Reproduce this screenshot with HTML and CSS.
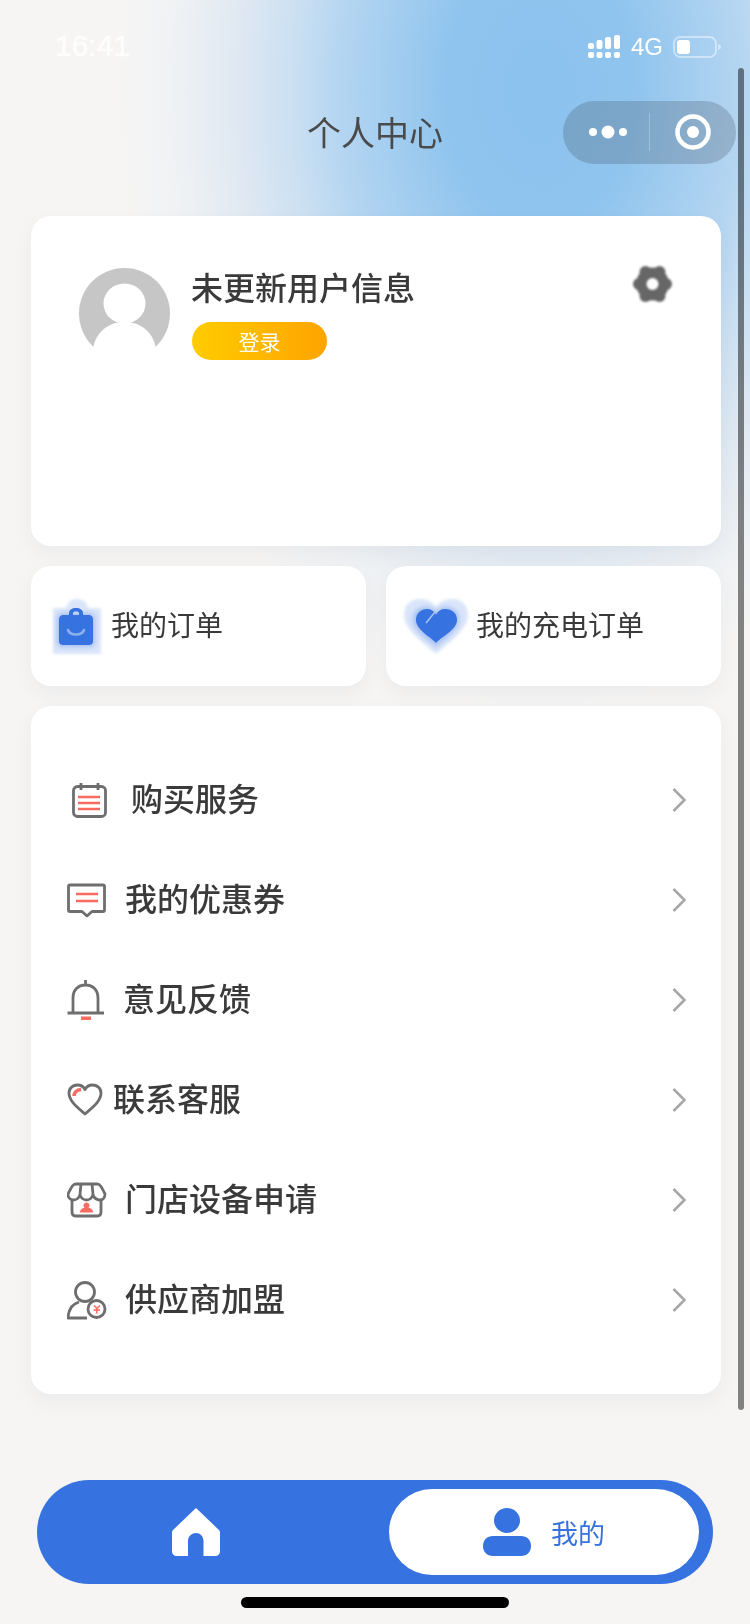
FILE: index.html
```html
<!DOCTYPE html>
<html lang="zh-CN">
<head>
<meta charset="utf-8">
<title>个人中心</title>
<link rel="stylesheet" href="styles.css">
</head>
<body>
<div class="page">
  <header class="status">
    <span class="time">16:41</span>
    <div class="status-right">
      <svg class="signal" width="32" height="23" viewBox="0 0 32 23"><g fill="#fff"><rect x="0" y="8" width="6" height="6" rx="2"/><rect x="8.500" y="5" width="6" height="9" rx="2"/><rect x="17" y="2" width="6" height="12" rx="2"/><rect x="26" y="0" width="6" height="14" rx="2"/><rect x="0" y="17" width="6" height="6" rx="2"/><rect x="8.500" y="17" width="6" height="6" rx="2"/><rect x="17" y="17" width="6" height="6" rx="2"/><rect x="26" y="17" width="6" height="6" rx="2"/></g></svg>
      <span class="net">4G</span>
      <svg class="battery" width="48" height="22" viewBox="0 0 48 22"><rect x="1" y="1" width="42" height="20" rx="6.500" fill="none" stroke="#fff" stroke-opacity=".45" stroke-width="2"/><rect x="4" y="4" width="13" height="14" rx="3" fill="#fff"/><path d="M45 8c2 .5 3 1.500 3 3s-1 2.500-3 3z" fill="#fff" fill-opacity=".45"/></svg>
    </div>
  </header>

  <nav class="nav">
    <span></span>
    <h1 class="title">个人中心</h1>
    <div class="capsule">
      <svg class="cap-dots" width="46" height="14" viewBox="0 0 46 14"><circle cx="4" cy="7" r="4" fill="#fff"/><circle cx="19" cy="7" r="6.500" fill="#fff"/><circle cx="34" cy="7" r="4" fill="#fff"/></svg>
      <i class="cap-sep"></i>
      <svg class="cap-target" width="36" height="36" viewBox="0 0 36 36"><circle cx="18" cy="18" r="15.500" fill="none" stroke="#fff" stroke-width="4.500"/><circle cx="18" cy="18" r="6" fill="#fff"/></svg>
    </div>
  </nav>

  <main class="main">
    <section class="card profile">
      <svg class="avatar" width="91" height="91" viewBox="0 0 91 91"><circle cx="45.500" cy="45.500" r="45.500" fill="#c6c6c6"/><ellipse cx="45.500" cy="35.500" rx="21" ry="20" fill="#fff"/><path d="M14.500 78C18 64 29 54 45.500 54S73 64 76.500 78V91H14.500Z" fill="#fff"/></svg>
      <div class="info">
        <div class="name">未更新用户信息</div>
        <div class="login">登录</div>
      </div>
      <svg class="gear" width="39" height="36" viewBox="0 0 39 36"><g fill="#666"><circle cx="33" cy="18" r="6"/><circle cx="6" cy="18" r="6"/><circle cx="26.500" cy="6" r="6"/><circle cx="12.500" cy="6" r="6"/><circle cx="26.500" cy="30" r="6"/><circle cx="12.500" cy="30" r="6"/><circle cx="19.500" cy="18" r="16.500"/></g><circle cx="19.500" cy="18" r="6" fill="#fff"/></svg>
    </section>

    <section class="quick">
      <div class="card quick-item quick-order">
        <svg class="q-icon" width="50" height="57" viewBox="0 0 50 57"><g class="halo" fill="#3672e0"><path d="M1 10H49V56H1Z"/><path d="M14 10C16 3 20 1 25 1S34 3 36 10Z"/></g><rect class="glow" x="5" y="15" width="38" height="34" rx="5" fill="#3672e0"/><path d="M17 17V15C17 12 20 10 24 10S31 12 31 15V17H37C39 17 41 19 41 21V43C41 46 39 47 37 47H11C9 47 7 46 7 43V21C7 19 9 17 11 17ZM21 17H27V15.500C27 14 26 13.500 24 13.500S21 14 21 15.500Z" fill="#3672e0"/><path d="M16 32C18 38 30 38 32 32" fill="none" stroke="#8db0ef" stroke-width="2.500" stroke-linecap="round"/></svg>
        <span class="q-text">我的订单</span>
      </div>
      <div class="card quick-item quick-charge">
        <svg class="q-icon" width="66" height="57" viewBox="0 0 66 57"><path class="halo" fill="#3672e0" d="M33 56C24 47 1 33 1 17 1 7 8 1 17 1 24 1 30 4 33 9 36 4 42 1 49 1 58 1 65 7 65 17 65 33 42 47 33 56Z"/><path class="glow" fill="#3672e0" d="M33 49C26 42 10 33 10 21 10 13 16 9 23 9 27 9 31 11 33 14 35 11 39 9 43 9 50 9 56 13 56 21 56 33 40 42 33 49Z"/><path fill="#3672e0" d="M33 45C28 39 13 32 13 22 13 15 18 11 24 11 28 11 31 13 33 16.500 35 13 38 11 42 11 49 11 54 15 54 22 54 32 38 39 33 45Z"/><path d="M23 25 32 14" fill="none" stroke="#a9c4f3" stroke-width="1.500"/></svg>
        <span class="q-text">我的充电订单</span>
      </div>
    </section>

    <section class="card menu">
      <div class="row">
        <svg class="m-icon soft" width="40" height="40" viewBox="0 0 40 40"><rect x="6.500" y="6.500" width="32" height="30" rx="4" class="line"/><path d="M14 3V10M31 3V10" class="line"/><path d="M11 17H33M11 23H33M11 29H33" class="red"/></svg>
        <span class="m-text gap-24">购买服务</span>
        <svg class="chev" width="14" height="24" viewBox="0 0 14 24"><path d="M1.500 1 12.500 12 1.500 23"/></svg>
      </div>
      <div class="row">
        <svg class="m-icon soft" width="40" height="40" viewBox="0 0 40 40"><path d="M3 5H36C37 5 37.500 5.500 37.500 6.500V30C37.500 31 37 31.500 36 31.500H25L20 36 15 31.500H3C2 31.500 1.500 31 1.500 30V6.500C1.500 5.500 2 5 3 5Z" class="line"/><path d="M9 14H31M9 21H31" class="red"/></svg>
        <span class="m-text gap-18">我的优惠券</span>
        <svg class="chev" width="14" height="24" viewBox="0 0 14 24"><path d="M1.500 1 12.500 12 1.500 23"/></svg>
      </div>
      <div class="row">
        <svg class="m-icon soft" width="40" height="40" viewBox="0 0 40 40"><path d="M18.500 0V5M6 33V18C6 10 11 5 18.500 5S31 10 31 18V33M.5 33H37" class="line"/><path d="M14 36.500H24V40H14Z" fill="#f96a60"/></svg>
        <span class="m-text gap-17">意见反馈</span>
        <svg class="chev" width="14" height="24" viewBox="0 0 14 24"><path d="M1.500 1 12.500 12 1.500 23"/></svg>
      </div>
      <div class="row">
        <svg class="m-icon soft" width="40" height="40" viewBox="0 0 40 40"><path d="M18 34C10 27 2 21 2 13 2 8 6 5 10.500 5 13.500 5 16.500 6.500 18 9.500 19.500 6.500 22.500 5 25.500 5 30 5 34 8 34 13 34 21 26 27 18 34Z" class="line"/><path d="M7 16C7 12.500 10 10 14 9.500" class="red thick"/></svg>
        <span class="m-text gap-6">联系客服</span>
        <svg class="chev" width="14" height="24" viewBox="0 0 14 24"><path d="M1.500 1 12.500 12 1.500 23"/></svg>
      </div>
      <div class="row">
        <svg class="m-icon soft" width="40" height="40" viewBox="0 0 40 40"><path d="M9 4H30C33 4 34 6 38 14 38 18 35.500 20 33 20 30.500 20 26 18 26 14 26 18 22 20 19.500 20S13 18 13 14C13 18 9 20 6.500 20S1 18 1 14C5 6 6 4 9 4ZM13 14 14 4M26 14 25 4" class="line"/><path d="M5 20V32C5 34.500 6.500 36 8.500 36H30.500C32.500 36 34 34.500 34 32V20" class="line"/><path d="M19.500 22.500a3 3 0 1 1 -.01 0ZM13 32.500C13 29 16 27.500 19.500 27.500S26 29 26 32.500Z" fill="#f96a60"/></svg>
        <span class="m-text gap-18">门店设备申请</span>
        <svg class="chev" width="14" height="24" viewBox="0 0 14 24"><path d="M1.500 1 12.500 12 1.500 23"/></svg>
      </div>
      <div class="row">
        <svg class="m-icon soft" width="40" height="40" viewBox="0 0 40 40"><circle cx="18" cy="12" r="9.500" class="line"/><path d="M12 22C5 24 1.500 30 1 38H20" class="line"/><circle cx="29.500" cy="29" r="8.500" class="line"/><path d="M27 25.500 30 28.500 33 25.500M29.800 28.500V33.500M26.500 30H33" class="red thin"/></svg>
        <span class="m-text gap-18">供应商加盟</span>
        <svg class="chev" width="14" height="24" viewBox="0 0 14 24"><path d="M1.500 1 12.500 12 1.500 23"/></svg>
      </div>
    </section>
  </main>

  <footer class="tabbar">
    <svg class="tab-home soft" width="48" height="48" viewBox="0 0 48 48"><path d="M24 0 47 22C47.700 22.700 48 23.500 48 24.500V43C48 46 46 48 43 48H31.500V33C31.500 28 28 25 24 25S16 28 16 33V48H5C2 48 0 46 0 43V24.500C0 23.500 .3 22.700 1 22Z" fill="#fff"/></svg>
    <div class="tab-active">
      <svg class="tab-user soft" width="48" height="48" viewBox="0 0 48 48"><ellipse cx="24" cy="12.500" rx="13" ry="12.500" fill="#3672e0"/><path d="M10 28H38C44 28 48 32 48 38S44 48 38 48H10C4 48 0 44 0 38S4 28 10 28Z" fill="#3672e0"/></svg>
      <span class="tab-label">我的</span>
    </div>
  </footer>
  <div class="home-bar"></div>
  <div class="scrollbar"></div>
</div>
</body>
</html>
```

FILE: styles.css
```css
* { box-sizing: border-box; }

html, body {
  margin: 0;
  padding: 0;
}

body {
  width: 750px;
  height: 1624px;
  overflow: hidden;
  background: #f6f5f4;
  font-family: "Noto Sans CJK SC", "Liberation Sans", sans-serif;
  color: #333;
}

.page {
  position: relative;
  width: 750px;
  height: 1624px;
  overflow: hidden;
  background-color: #f6f5f4;
  background-image: radial-gradient(ellipse 420px 620px at 540px 90px, #8bc2ee 0, #8fc4ee 22%, #b4d5f1 48%, #c9dff2 58%, #dfe8f2 72%, #eef1f4 86%, rgba(246, 245, 244, 0) 100%);
  background-repeat: no-repeat;
  filter: blur(.35px);
}

.soft { filter: blur(.5px); }

/* status bar */
.status {
  height: 88px;
  display: flex;
  justify-content: space-between;
  align-items: flex-start;
  padding: 35px 29px 0 55px;
  color: #fff;
  font-family: "Liberation Sans", sans-serif;
}

.time {
  font-size: 30px;
  line-height: 22px;
  opacity: .8;
  -webkit-text-stroke: .5px #fff;
}

.status-right {
  display: flex;
  align-items: center;
  height: 23px;
}

.net {
  margin: 0 10px 0 11px;
  font-size: 24px;
  line-height: 23px;
}

/* navigation */
.nav {
  height: 88px;
  display: grid;
  grid-template-columns: 1fr auto 1fr;
  align-items: center;
  padding-right: 14px;
}

.title {
  margin: 0;
  padding: 0 0 2px 14px;
  font-size: 34px;
  font-weight: 400;
  color: #4a4a4a;
}

.capsule {
  justify-self: end;
  width: 173px;
  height: 63px;
  display: flex;
  align-items: center;
  padding-left: 26px;
  border-radius: 32px;
  background: rgba(65, 75, 90, .25);
}

.cap-sep {
  width: 1px;
  height: 38px;
  margin: 0 25px 0 14px;
  background: rgba(255, 255, 255, .25);
}

/* main */
.main {
  display: flex;
  flex-direction: column;
  gap: 20px;
  padding: 40px 29px 0 31px;
}

.card {
  background: #fff;
  border-radius: 20px;
  box-shadow: 0 8px 20px rgba(60, 60, 70, .05);
}

.profile {
  height: 330px;
  display: flex;
  align-items: flex-start;
  padding: 50px 49px 0 48px;
}

.avatar { margin-top: 2px; flex: none; }

.info {
  margin: -2px 0 0 21px;
}

.name {
  font-size: 32px;
  line-height: 44px;
  font-weight: 500;
  color: #3a3a3a;
}

.login {
  width: 135px;
  height: 38px;
  margin: 14px 0 0 1px;
  border-radius: 19px;
  background: linear-gradient(90deg, #ffcc00, #ffa400);
  color: #fff;
  font-size: 21px;
  line-height: 38px;
  text-align: center;
}

.gear { margin-left: auto; flex: none; filter: blur(.8px); }

/* quick links */
.quick {
  display: grid;
  grid-template-columns: 1fr 1fr;
  gap: 20px;
}

.quick-item {
  height: 120px;
  display: flex;
  align-items: center;
}

.quick-order { padding-left: 21px; gap: 9px; }
.quick-charge { padding-left: 17px; gap: 7px; }

.q-icon { flex: none; overflow: visible; filter: blur(.5px); }
.halo { opacity: .18; filter: blur(1.500px); }
.glow { opacity: .32; filter: blur(2.500px); }

.q-text {
  padding-bottom: 4px;
  font-size: 28px;
  color: #3a3a3a;
}

/* menu */
.menu {
  height: 688px;
  padding: 44px 35px 44px 36px;
}

.row {
  height: 100px;
  display: flex;
  align-items: center;
}

.m-icon { flex: none; }

.line {
  fill: none;
  stroke: #6e6e6e;
  stroke-width: 2.800;
  stroke-linejoin: round;
}

.red {
  fill: none;
  stroke: #f96a60;
  stroke-width: 2.600;
}

.red.thick { stroke-width: 3.500; }
.red.thin { stroke-width: 1.500; }

.m-text {
  flex: 1;
  padding-bottom: 6px;
  font-size: 32px;
  font-weight: 500;
  color: #3a3a3a;
}

.gap-6 { margin-left: 6px; }
.gap-17 { margin-left: 16px; }
.gap-18 { margin-left: 18px; }
.gap-24 { margin-left: 24px; }

.chev {
  flex: none;
  fill: none;
  stroke: #a6a6a6;
  stroke-width: 2.500;
}

/* tab bar */
.tabbar {
  width: 676px;
  height: 104px;
  margin: 86px 0 0 37px;
  display: flex;
  align-items: center;
  padding: 0 14px 0 135px;
  border-radius: 52px;
  background: #3672e0;
}

.tab-active {
  width: 310px;
  height: 86px;
  margin-left: auto;
  display: flex;
  align-items: center;
  justify-content: center;
  gap: 20px;
  border-radius: 43px;
  background: #fff;
}

.tab-label {
  font-size: 27px;
  color: #3672e0;
}

.home-bar {
  width: 268px;
  height: 11px;
  margin: 13px 0 0 241px;
  border-radius: 6px;
  background: #000;
}

.scrollbar {
  position: absolute;
  left: 738px;
  top: 68px;
  width: 6px;
  height: 1342px;
  border-radius: 3px;
  background: rgba(0, 0, 0, .47);
}
```
